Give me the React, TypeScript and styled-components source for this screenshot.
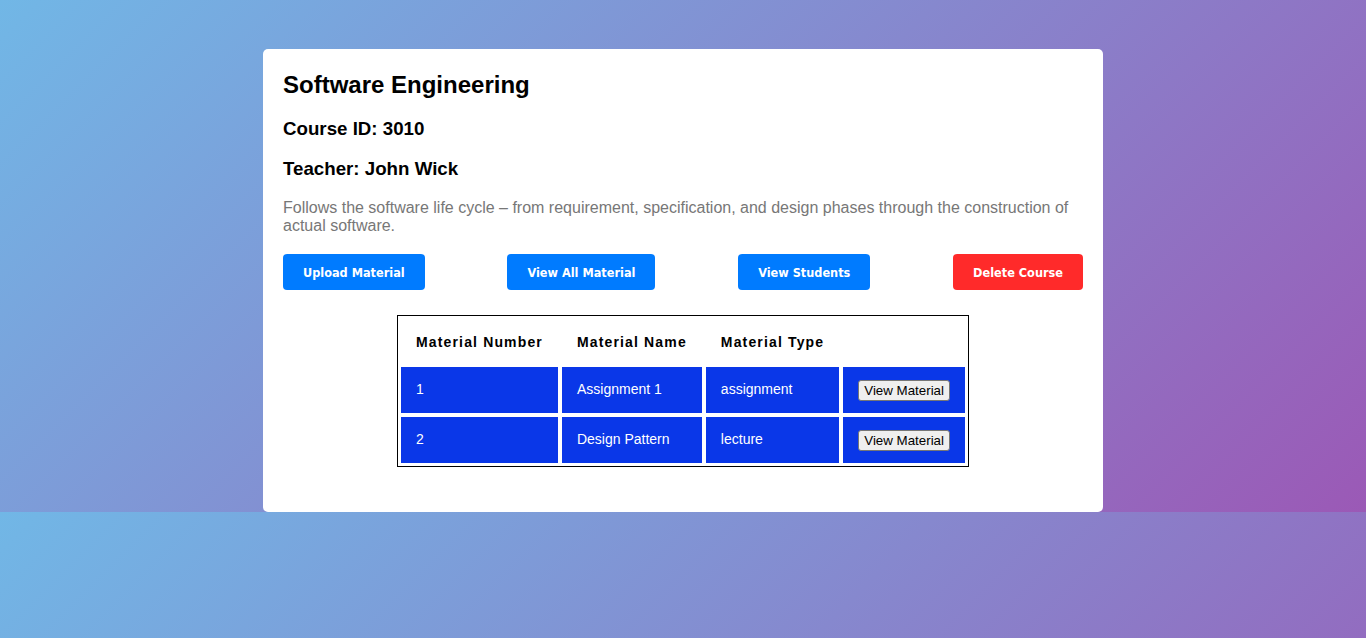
import React from "react";
import styled, { createGlobalStyle } from "styled-components";

interface Material {
  number: string;
  name: string;
  type: string;
}

const materials: Material[] = [
  { number: "1", name: "Assignment 1", type: "assignment" },
  { number: "2", name: "Design Pattern", type: "lecture" },
];

const GlobalStyle = createGlobalStyle`
  html, body {
    margin: 0;
  }
  body {
    padding-top: 49px;
    font-family: "Liberation Sans", Arial, sans-serif;
    background: linear-gradient(135deg, #71b7e6, #9b59b6);
  }
`;

const Card = styled.div`
  width: 800px;
  margin: 0 auto;
  padding: 22px 20px 20px;
  background: #fff;
  border-radius: 5px;
`;

const Title = styled.h2`
  margin: 0 0 19px;
  font-size: 24px;
  font-weight: 700;
  color: #000;
`;

const Info = styled.h3`
  margin: 0 0 18px;
  font-size: 18.72px;
  font-weight: 700;
  color: #000;
`;

const Description = styled.p`
  margin: 19px 0 0;
  font-size: 16px;
  line-height: 18px;
  color: #777;
`;

const Actions = styled.div`
  display: flex;
  justify-content: space-between;
  margin-top: 19px;
`;

const ActionButton = styled.button<{ danger?: boolean }>`
  height: 36px;
  padding: 0 20px;
  border: none;
  border-radius: 4px;
  background: ${({ danger }) => (danger ? "#ff2a2a" : "#007bff")};
  color: #fff;
  font-family: "DejaVu Sans Condensed", "DejaVu Sans", sans-serif;
  font-size: 12.6px;
  font-weight: 700;
  cursor: pointer;
`;

const Table = styled.table`
  margin: 25px auto 25px;
  border: 1px solid #000;
  border-spacing: 2px;
`;

const HeadCell = styled.th`
  padding: 15px 15px 13px;
  border: 1px solid #fff;
  text-align: left;
  font-size: 14px;
  line-height: 16px;
  font-weight: 700;
  letter-spacing: 1.15px;
  color: #000;
`;

const Cell = styled.td`
  padding: 12px 15px;
  border: 1px solid #fff;
  background: #0a37e8;
  color: #fff;
  font-size: 14px;
  line-height: 21px;
`;

const SmallButton = styled.button`
  height: 21px;
  padding: 0 5px;
  border: 1px solid #767676;
  border-radius: 3px;
  background: #efefef;
  color: #000;
  font-family: "Liberation Sans", Arial, sans-serif;
  font-size: 13.33px;
  vertical-align: middle;
  cursor: pointer;
`;

const App: React.FC = () => {
  return (
    <>
      <GlobalStyle />
      <Card>
        <Title>Software Engineering</Title>
        <Info>Course ID: 3010</Info>
        <Info>Teacher: John Wick</Info>
        <Description>
          Follows the software life cycle – from requirement, specification, and design phases through the
          construction of actual software.
        </Description>
        <Actions>
          <ActionButton>Upload Material</ActionButton>
          <ActionButton>View All Material</ActionButton>
          <ActionButton>View Students</ActionButton>
          <ActionButton danger>Delete Course</ActionButton>
        </Actions>
        <Table>
          <thead>
            <tr>
              <HeadCell>Material Number</HeadCell>
              <HeadCell>Material Name</HeadCell>
              <HeadCell>Material Type</HeadCell>
              <HeadCell />
            </tr>
          </thead>
          <tbody>
            {materials.map((m) => (
              <tr key={m.number}>
                <Cell>{m.number}</Cell>
                <Cell>{m.name}</Cell>
                <Cell>{m.type}</Cell>
                <Cell>
                  <SmallButton>View Material</SmallButton>
                </Cell>
              </tr>
            ))}
          </tbody>
        </Table>
      </Card>
    </>
  );
};

export default App;
